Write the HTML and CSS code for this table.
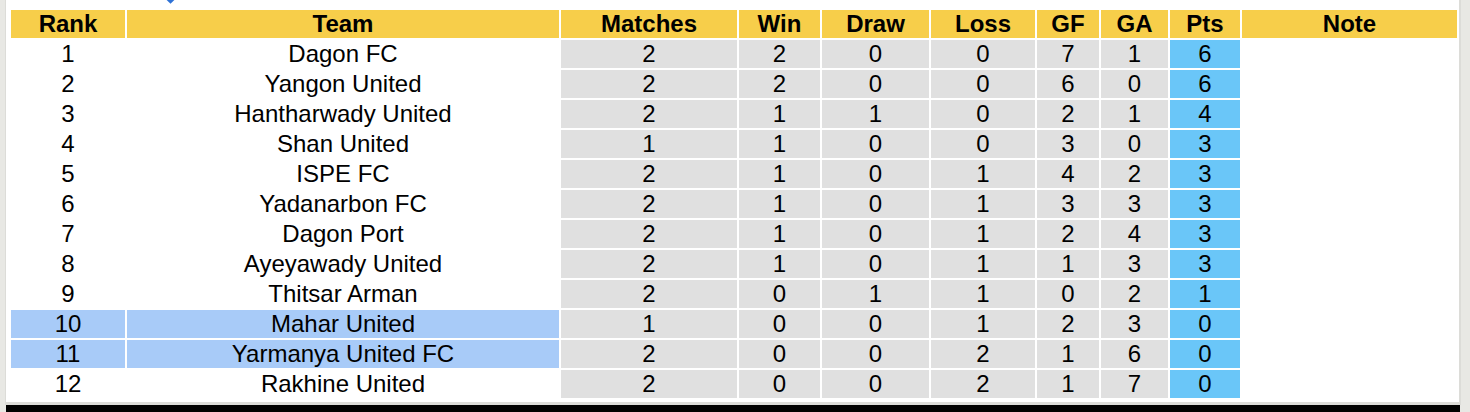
FILE: index.html
```html
<!DOCTYPE html>
<html>
<head>
<meta charset="utf-8">
<link rel="stylesheet" href="styles.css">
</head>
<body>
<div class="frame">
  <span class="pointer"></span>
  <table class="standings">
    <colgroup>
      <col class="c-rank"><col class="c-team"><col class="c-m"><col class="c-w"><col class="c-d"><col class="c-l"><col class="c-gf"><col class="c-ga"><col class="c-pts"><col class="c-note">
    </colgroup>
    <thead>
      <tr><th>Rank</th><th>Team</th><th>Matches</th><th>Win</th><th>Draw</th><th>Loss</th><th>GF</th><th>GA</th><th>Pts</th><th>Note</th></tr>
    </thead>
    <tbody>
      <tr><td>1</td><td>Dagon FC</td><td class="s">2</td><td class="s">2</td><td class="s">0</td><td class="s">0</td><td class="s">7</td><td class="s">1</td><td class="p">6</td><td></td></tr>
      <tr><td>2</td><td>Yangon United</td><td class="s">2</td><td class="s">2</td><td class="s">0</td><td class="s">0</td><td class="s">6</td><td class="s">0</td><td class="p">6</td><td></td></tr>
      <tr><td>3</td><td>Hantharwady United</td><td class="s">2</td><td class="s">1</td><td class="s">1</td><td class="s">0</td><td class="s">2</td><td class="s">1</td><td class="p">4</td><td></td></tr>
      <tr><td>4</td><td>Shan United</td><td class="s">1</td><td class="s">1</td><td class="s">0</td><td class="s">0</td><td class="s">3</td><td class="s">0</td><td class="p">3</td><td></td></tr>
      <tr><td>5</td><td>ISPE FC</td><td class="s">2</td><td class="s">1</td><td class="s">0</td><td class="s">1</td><td class="s">4</td><td class="s">2</td><td class="p">3</td><td></td></tr>
      <tr><td>6</td><td>Yadanarbon FC</td><td class="s">2</td><td class="s">1</td><td class="s">0</td><td class="s">1</td><td class="s">3</td><td class="s">3</td><td class="p">3</td><td></td></tr>
      <tr><td>7</td><td>Dagon Port</td><td class="s">2</td><td class="s">1</td><td class="s">0</td><td class="s">1</td><td class="s">2</td><td class="s">4</td><td class="p">3</td><td></td></tr>
      <tr><td>8</td><td>Ayeyawady United</td><td class="s">2</td><td class="s">1</td><td class="s">0</td><td class="s">1</td><td class="s">1</td><td class="s">3</td><td class="p">3</td><td></td></tr>
      <tr><td>9</td><td>Thitsar Arman</td><td class="s">2</td><td class="s">0</td><td class="s">1</td><td class="s">1</td><td class="s">0</td><td class="s">2</td><td class="p">1</td><td></td></tr>
      <tr class="hl"><td>10</td><td>Mahar United</td><td class="s">1</td><td class="s">0</td><td class="s">0</td><td class="s">1</td><td class="s">2</td><td class="s">3</td><td class="p">0</td><td></td></tr>
      <tr class="hl"><td>11</td><td>Yarmanya United FC</td><td class="s">2</td><td class="s">0</td><td class="s">0</td><td class="s">2</td><td class="s">1</td><td class="s">6</td><td class="p">0</td><td></td></tr>
      <tr><td>12</td><td>Rakhine United</td><td class="s">2</td><td class="s">0</td><td class="s">0</td><td class="s">2</td><td class="s">1</td><td class="s">7</td><td class="p">0</td><td></td></tr>
    </tbody>
  </table>
</div>
<div class="bar"></div>
</body>
</html>
```
FILE: styles.css
```css
html, body {
  margin: 0;
  padding: 0;
  background: #e8e8e4;
  overflow: hidden;
}

body {
  font-family: "Liberation Sans", Arial, sans-serif;
  color: #000;
}

.frame {
  position: relative;
  box-sizing: border-box;
  margin-left: 5px;
  width: 1456px;
  padding: 8px 0 2px 3px;
  background: #fff;
  border-left: 1px solid #dcdcd8;
  border-right: 2px solid #dcdcd8;
  border-bottom: 3px solid #dcdcd8;
}

.pointer {
  position: absolute;
  left: 160px;
  top: -7px;
  width: 9px;
  height: 9px;
  background: #2f72d6;
  transform: rotate(45deg);
}

.bar {
  margin-left: 6px;
  width: 1454px;
  height: 20px;
  background: #000;
}

.standings {
  table-layout: fixed;
  width: 1450px;
  border-collapse: separate;
  border-spacing: 2px;
  font-size: 24px;
}

.c-rank { width: 114px; }
.c-team { width: 432px; }
.c-m { width: 176px; }
.c-w { width: 81px; }
.c-d { width: 107px; }
.c-l { width: 104px; }
.c-gf { width: 62px; }
.c-ga { width: 67px; }
.c-pts { width: 70px; }
.c-note { width: 215px; }

.standings th,
.standings td {
  height: 28px;
  padding: 0;
  line-height: 28px;
  text-align: center;
  white-space: nowrap;
  overflow: hidden;
}

.standings th {
  background: #f7ce4a;
  font-weight: bold;
}

.standings td.s {
  background: #e0e0e0;
}

.standings td.p {
  background: #6ac6f8;
}

.standings tr.hl td:nth-child(1),
.standings tr.hl td:nth-child(2) {
  background: #a8cbf8;
}
```
